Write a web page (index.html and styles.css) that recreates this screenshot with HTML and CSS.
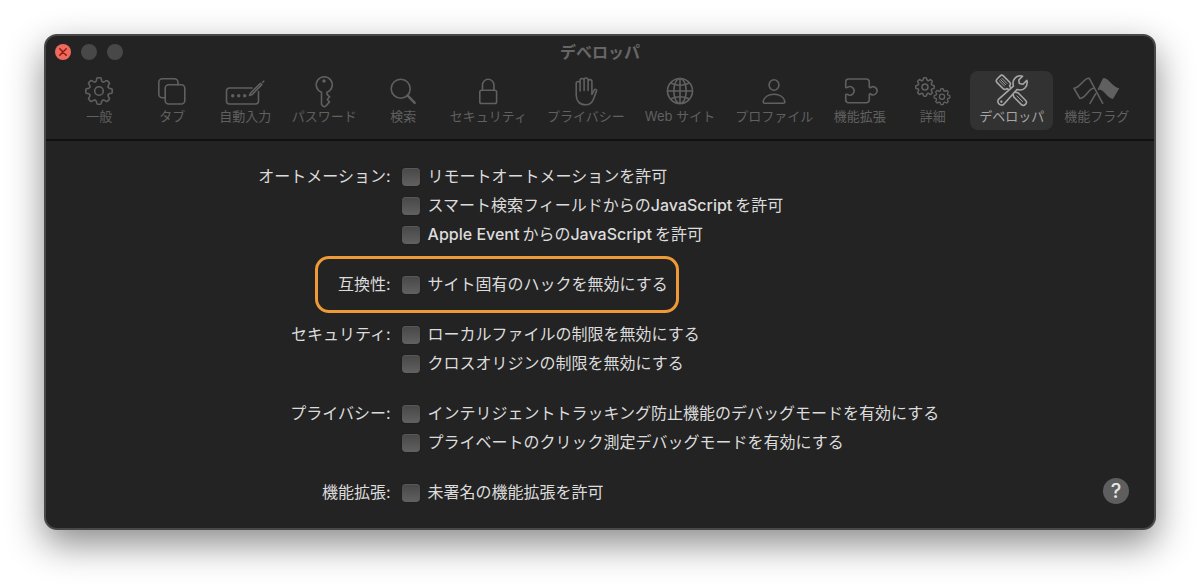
FILE: index.html
```html
<!DOCTYPE html>
<html lang="ja">
<head>
<meta charset="utf-8">
<title>デベロッパ</title>
<link rel="stylesheet" href="styles.css">
</head>
<body>
<svg class="defs" aria-hidden="true">
  <defs>
    <path id="tooth" d="M-3.83-9.24Q-2.9-9.6-2.6-10.6L-2.2-12.4Q-2-13.2-1.2-13.2H1.2Q2-13.2 2.2-12.4L2.6-10.6Q2.9-9.6 3.83-9.24"/>
    <g id="gear">
      <use href="#tooth"/><use href="#tooth" transform="rotate(45)"/><use href="#tooth" transform="rotate(90)"/><use href="#tooth" transform="rotate(135)"/>
      <use href="#tooth" transform="rotate(180)"/><use href="#tooth" transform="rotate(225)"/><use href="#tooth" transform="rotate(270)"/><use href="#tooth" transform="rotate(315)"/>
      <circle r="4.3"/>
    </g>
  </defs>
</svg>
<main class="window">
  <header class="titlebar">
    <div class="lights">
      <button class="light light-close" aria-label="閉じる"><svg viewBox="0 0 16 16"><path d="M4.8 4.8l6.4 6.4M11.2 4.8l-6.4 6.4"/></svg></button>
      <button class="light" aria-label="しまう" disabled></button>
      <button class="light" aria-label="拡大" disabled></button>
    </div>
    <h1 class="title">デベロッパ</h1>
  </header>

  <nav class="toolbar">
    <button class="tab"><svg class="icon" viewBox="0 0 48 32"><use href="#gear" transform="translate(24 16)"/></svg><span>一般</span></button>
    <button class="tab"><svg class="icon" viewBox="0 0 48 32"><path d="M17 22.8H14.3a3.5 3.5 0 0 1-3.5-3.5V7.2a3.5 3.5 0 0 1 3.5-3.5H26.500a3.500 3.500 0 0 1 3.500 3.500V9.800"/><rect x="17.200" y="9.800" width="19.600" height="19.200" rx="3.500"/></svg><span>タブ</span></button>
    <button class="tab"><svg class="icon" viewBox="0 0 48 32"><path d="M31 13H8.500a3 3 0 0 0-3 3v10a3 3 0 0 0 3 3h26a3 3 0 0 0 3-3v-9.500M28.500 20.500l1-2.500 10-9.700 1.300 1.300-9.800 10zM41.800 7.200l1-1"/><g class="solid"><circle cx="11.700" cy="20.700" r="1.700"/><circle cx="17.700" cy="20.700" r="1.700"/><circle cx="23.700" cy="20.700" r="1.700"/></g></svg><span>自動入力</span></button>
    <button class="tab"><svg class="icon" viewBox="0 0 48 32"><path d="M21.500 17.300A8 8 0 1 1 27 17.300v2l2.700 2.500-2.500 2.700 2.300 2.400-3.800 4.300q-1.500 1-2.600 0l-1.600-1.800z"/><circle class="solid" cx="24" cy="6" r="1.800"/></svg><span>パスワード</span></button>
    <button class="tab"><svg class="icon" viewBox="0 0 48 32"><circle cx="21.700" cy="13.700" r="9.500"/><path class="thick" d="M28.700 20.700l7 7.200"/></svg><span>検索</span></button>
    <button class="tab"><svg class="icon" viewBox="0 0 48 32"><rect x="15.800" y="15.300" width="16.800" height="13.200" rx="1.800"/><path d="M18.500 15V10a5.700 5.700 0 0 1 11.400 0v5"/></svg><span>セキュリティ</span></button>
    <button class="tab"><svg class="icon" viewBox="0 0 48 32"><path d="M14.200 20V8.500a1.950 1.950 0 0 1 3.900 0V16M18.100 9V5.500a2 2 0 0 1 4 0V15.500M22.100 5a2 2 0 0 1 4 0V15.500M26.100 6.500a1.900 1.900 0 0 1 3.800 0V19.500l2.200-4.200c.9-1.700 3-1 2.400.8L31.500 24c-1.300 3.700-4 5.800-8 5.800-6 0-9.300-3.800-9.300-9.800"/></svg><span>プライバシー</span></button>
    <button class="tab"><svg class="icon" viewBox="0 0 48 32"><circle cx="24" cy="16" r="12.500"/><ellipse cx="24" cy="16" rx="6.200" ry="12.500"/><path d="M24 3.500v25M11.500 16h25M14.700 8q9.300 4.600 18.600 0M14.700 24q9.300-4.600 18.600 0"/></svg><span>Web サイト</span></button>
    <button class="tab"><svg class="icon" viewBox="0 0 48 32"><ellipse cx="24" cy="10" rx="4.900" ry="5.300"/><path d="M14.700 28.300h18.600q1.700 0 1.500-1.800c-1-4.600-5.600-7.200-10.800-7.200s-9.800 2.600-10.800 7.200q-.2 1.800 1.500 1.800z"/></svg><span>プロファイル</span></button>
    <button class="tab"><svg class="icon" viewBox="0 0 48 32"><path d="M9.700 12V7a3 3 0 0 1 3-3h17.600a3 3 0 0 1 3 3v4.800q.1 1.300 1.300.8a4 4 0 1 1 0 6.400q-1.200-.5-1.300.8v5a3 3 0 0 1-3 3H12.700a3 3 0 0 1-3-3v-4.500q.2-1.600 1.800-.9a4.200 4.200 0 1 0 0-7q-1.600.8-1.800-.4z"/></svg><span>機能拡張</span></button>
    <button class="tab"><svg class="icon" viewBox="0 0 48 32"><g class="small-gear"><use href="#gear" transform="translate(16 12) scale(.7)"/><use href="#gear" transform="translate(33 21.700) scale(.6)"/></g></svg><span>詳細</span></button>
    <button class="tab tab-current" aria-current="page"><svg class="icon" viewBox="0 0 48 32">
      <g transform="translate(24 16) rotate(-45)"><path d="M-2-5.500Q-4.600-5.500-4.600-8V-16.500Q-4.600-19-2-19H2Q4.600-19 4.600-16.500V-8Q4.600-5.500 2-5.500L1.400-3.500V3L3 5.500V16Q3 19 0 19T-3 16V5.500L-1.400 3V-3.500z"/><path class="thin" d="M-1.800-16v7M0-16v7M1.800-16v7M0 7v8"/></g>
      <g transform="translate(24 16) rotate(45)"><path class="front" d="M-2.500-4.500Q-7-7-7-11.300-6.800-16-3-18V-12.500L0-10.500 3-12.500V-18Q6.800-16 7-11.300 7-7 2.500-4.500L3.600 15.500A3.700 3.700 0 0 1-3.600 15.500z"/><circle class="solid" cy="15" r="1.200"/></g>
    </svg><span>デベロッパ</span></button>
    <button class="tab"><svg class="icon" viewBox="0 0 48 32"><path d="M29.700 28.300L16.300 3.300C10.500 2.500 8 12.500 1 13.300L7 23.500C13.800 22.500 15.500 12.500 21.500 13.300M17 28.300l5.600-9.500M25.500 14.300L30.500 4"/><path class="solid" d="M30.600 3C35.800 2.700 39 12 46.300 13.200L40 24C33.500 23 31 13.700 25 14.300z"/></svg><span>機能フラグ</span></button>
  </nav>

  <form class="settings">
    <div class="group" role="group" aria-labelledby="g-auto">
      <div class="group-label" id="g-auto">オートメーション:</div>
      <div class="options">
        <label class="option"><input type="checkbox"><span>リモートオートメーションを許可</span></label>
        <label class="option"><input type="checkbox"><span>スマート検索フィールドからの<span class="latin">JavaScript</span>を許可</span></label>
        <label class="option"><input type="checkbox"><span><span class="latin">Apple Event</span>からの<span class="latin">JavaScript</span>を許可</span></label>
      </div>
    </div>
    <div class="group" role="group" aria-labelledby="g-compat">
      <div class="group-label" id="g-compat">互換性:</div>
      <div class="options options-marked">
        <label class="option"><input type="checkbox"><span>サイト固有のハックを無効にする</span></label>
      </div>
    </div>
    <div class="group" role="group" aria-labelledby="g-sec">
      <div class="group-label" id="g-sec">セキュリティ:</div>
      <div class="options">
        <label class="option"><input type="checkbox"><span>ローカルファイルの制限を無効にする</span></label>
        <label class="option"><input type="checkbox"><span>クロスオリジンの制限を無効にする</span></label>
      </div>
    </div>
    <div class="group" role="group" aria-labelledby="g-priv">
      <div class="group-label" id="g-priv">プライバシー:</div>
      <div class="options">
        <label class="option"><input type="checkbox"><span>インテリジェントトラッキング防止機能のデバッグモードを有効にする</span></label>
        <label class="option"><input type="checkbox"><span>プライベートのクリック測定デバッグモードを有効にする</span></label>
      </div>
    </div>
    <div class="group" role="group" aria-labelledby="g-ext">
      <div class="group-label" id="g-ext">機能拡張:</div>
      <div class="last-row">
        <label class="option"><input type="checkbox"><span>未署名の機能拡張を許可</span></label>
        <button class="help" type="button" aria-label="ヘルプ">?</button>
      </div>
    </div>
  </form>
</main>
</body>
</html>
```
FILE: styles.css
```css
* {
  box-sizing: border-box;
}

body {
  margin: 0;
  padding: 34px 44px 54px;
  background: #fff;
  font-family: Inter, "Noto Sans CJK JP", sans-serif;
  font-size: 16px;
  color: #dcdcdc;
}

button {
  border: 0;
  padding: 0;
  background: none;
  font: inherit;
  color: inherit;
}

.defs {
  position: absolute;
  width: 0;
  height: 0;
}

.window {
  border: 2px solid #484848;
  border-radius: 13px;
  background: #232323;
  box-shadow: 0 14px 36px rgba(0, 0, 0, 0.46);
}

.titlebar {
  display: grid;
  grid-template-columns: 1fr auto 1fr;
  align-items: center;
  height: 32px;
  padding: 0 9px;
}

.lights {
  display: flex;
  gap: 10px;
}

.light {
  width: 16px;
  height: 16px;
  border-radius: 50%;
  background: #484848;
}

.light-close {
  background: #ee6a5f;
}

.light svg {
  display: block;
  fill: none;
  stroke: #8c1a10;
  stroke-width: 1.5;
  stroke-linecap: round;
}

.title {
  margin: 0;
  font-size: 16px;
  line-height: 24px;
  font-weight: 700;
  color: #666;
}

.toolbar {
  display: flex;
  justify-content: center;
  gap: 2px;
  padding: 3px 8px 9px 10px;
  border-bottom: 2px solid #111;
}

.tab {
  display: flex;
  flex-direction: column;
  align-items: center;
  min-width: 71px;
  padding: 4px 9px 5px;
  border-radius: 8px;
  font-size: 13px;
  line-height: 18px;
  white-space: nowrap;
  color: #606060;
}

.tab-current {
  background: #323232;
  color: #a6a6a6;
}

.icon {
  width: 48px;
  height: 32px;
  overflow: visible;
  fill: none;
  stroke: currentColor;
  stroke-width: 1.6;
  stroke-linecap: round;
  stroke-linejoin: round;
}

.icon .solid {
  fill: currentColor;
  stroke: none;
}

.icon .thick {
  stroke-width: 2.4;
}

.icon .thin {
  stroke-width: 0.9;
}

.icon .front {
  fill: #323232;
}

.icon .small-gear {
  stroke-width: 2.2;
}

.settings {
  display: flex;
  flex-direction: column;
  gap: 21px;
  padding: 21px 25px 21px 0;
}

.group {
  display: grid;
  grid-template-columns: 9fr 19fr;
  column-gap: 11px;
  line-height: 29px;
}

.group-label {
  text-align: right;
}

.options {
  justify-self: start;
}

.options-marked {
  position: relative;
}

.options-marked::before {
  content: "";
  position: absolute;
  inset: -14px -11px -14px -87px;
  border: 3px solid #ef9a37;
  border-radius: 14px;
  pointer-events: none;
}

.option {
  display: flex;
  align-items: center;
  gap: 8px;
}

.option input {
  appearance: none;
  flex: none;
  width: 18px;
  height: 18px;
  margin: 0;
  border-radius: 4px;
  background: linear-gradient(#474747, #616161);
  box-shadow: inset 0 1px 0 #585858, 0 0 1px #111;
}

.latin {
  margin-right: 3px;
  font-weight: 500;
}

.last-row {
  display: flex;
  justify-content: space-between;
  align-items: flex-start;
}

.help {
  width: 26px;
  height: 26px;
  border-radius: 50%;
  background: #5e5e5e;
  color: #e6e6e6;
  font-size: 20px;
  line-height: 26px;
  font-weight: 500;
}
```
